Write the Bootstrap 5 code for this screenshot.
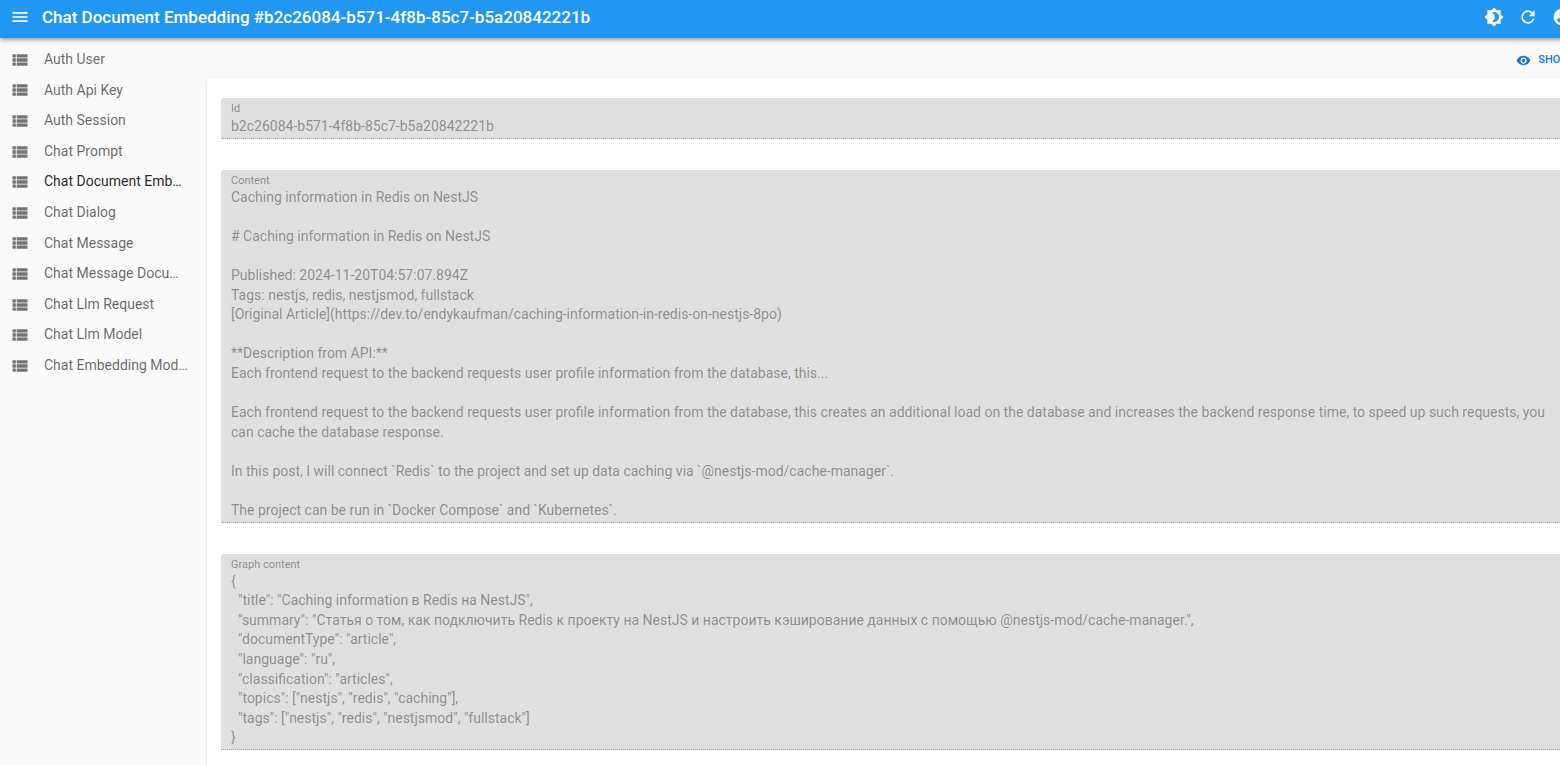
<!DOCTYPE html>
<html lang="en">
<head>
<meta charset="utf-8">
<meta name="viewport" content="width=device-width, initial-scale=1">
<title>Chat Document Embedding</title>
<link href="https://cdn.jsdelivr.net/npm/bootstrap@5.3.0/dist/css/bootstrap.min.css" rel="stylesheet">
<style>
  body { font-family: Roboto, "Liberation Sans", sans-serif; font-size: 14px; line-height: 1.4; background: #fafafa; color: rgba(0,0,0,.87); overflow: hidden; }
  svg { fill: currentColor; width: 20px; height: 20px; flex: none; display: block; }
  .shell { width: calc(100% + 40px); }
  .topbar { background: #2196f3; height: 38px; padding: 0 21px 4px 3px; box-shadow: 0 2px 3px -1px rgba(0,0,0,.2), 0 3px 4px rgba(0,0,0,.14), 0 1px 8px rgba(0,0,0,.12); z-index: 2; }
  .topbar h1 { font-size: 17px; line-height: 24px; font-weight: 500; padding-left: 5px; }
  .icon-btn { width: 34px; height: 34px; padding: 7px; color: #fff; border: 0; }
  .side { width: 206px; padding: 7px 15px 0 0; flex: none; }
  .side a { color: rgba(0,0,0,.6); padding: 5px 2px 5px 10px; gap: 14px; margin-bottom: 1px; text-decoration: none; }
  .side svg { color: rgba(0,0,0,.54); margin: -1px 0; }
  .side a.active { color: rgba(0,0,0,.87); }
  .main-col { padding: 0 16px 0 1px; }
  .actions { height: 40px; padding: 8px 6px 4px 0; }
  .show-link { color: #1976d2; font-size: 11px; line-height: 20px; font-weight: 500; gap: 7px; padding: 0 8px; text-decoration: none; }
  .show-link svg { width: 15px; height: 15px; }
  .panel { background: #fff; border-radius: 4px; padding: 20px 14px; box-shadow: 0 2px 1px -1px rgba(0,0,0,.2), 0 1px 1px rgba(0,0,0,.14), 0 1px 3px rgba(0,0,0,.12); gap: 31px; }
  .filled { background: #e0e0e0; border-radius: 3px 3px 0 0; border-bottom: 1px dotted rgba(0,0,0,.28); padding: 5px 10px 1px; }
  .filled label { color: rgba(0,0,0,.42); font-size: 11px; line-height: 12px; margin-bottom: 1px; }
  .filled input, .filled textarea { display: block; width: 100%; border: 0; background: transparent; color: rgba(0,0,0,.4); padding: 0; resize: none; overflow: hidden; line-height: 1.4; }
  .filled input { padding-top: 1px; }
</style>
</head>
<body>
<div class="shell d-flex flex-column min-vh-100">
  <header class="topbar d-flex align-items-center text-white position-relative">
    <button class="icon-btn btn" type="button" aria-label="Close menu"><svg viewBox="0 0 24 24"><path d="M3 18h18v-2H3v2zm0-5h18v-2H3v2zm0-7v2h18V6H3z"/></svg></button>
    <h1 class="m-0 flex-grow-1 text-truncate">Chat Document Embedding #b2c26084-b571-4f8b-85c7-b5a20842221b</h1>
    <button class="icon-btn btn" type="button" aria-label="Toggle theme"><svg viewBox="0 0 24 24"><path d="M20 8.69V4h-4.69L12 .69 8.69 4H4v4.69L.69 12 4 15.31V20h4.69L12 23.31 15.31 20H20v-4.69L23.31 12 20 8.69zM12 18c-.89 0-1.74-.2-2.5-.55C11.56 16.5 13 14.42 13 12s-1.44-4.5-3.5-5.45C10.26 6.2 11.11 6 12 6c3.31 0 6 2.69 6 6s-2.69 6-6 6z"/></svg></button>
    <button class="icon-btn btn" type="button" aria-label="Refresh"><svg viewBox="0 0 24 24"><path d="M17.65 6.35C16.2 4.9 14.21 4 12 4c-4.42 0-7.99 3.58-7.99 8s3.57 8 7.99 8c3.73 0 6.84-2.55 7.73-6h-2.08c-.82 2.33-3.04 4-5.65 4-3.31 0-6-2.69-6-6s2.69-6 6-6c1.66 0 3.14.69 4.22 1.78L13 11h7V4l-2.35 2.35z"/></svg></button>
    <button class="icon-btn btn" type="button" aria-label="Profile"><svg viewBox="0 0 24 24"><path d="M12 2C6.48 2 2 6.48 2 12s4.48 10 10 10 10-4.48 10-10S17.52 2 12 2zm0 3c1.66 0 3 1.34 3 3s-1.34 3-3 3-3-1.34-3-3 1.34-3 3-3zm0 14.2c-2.5 0-4.71-1.28-6-3.22.03-1.99 4-3.08 6-3.08 1.99 0 5.97 1.09 6 3.08-1.29 1.94-3.5 3.22-6 3.22z"/></svg></button>
  </header>
  <svg class="d-none" aria-hidden="true"><symbol id="list" viewBox="0 0 24 24"><path d="M3 14h4v-4H3v4zm0 5h4v-4H3v4zM3 9h4V5H3v4zm5 5h13v-4H8v4zm0 5h13v-4H8v4zM8 5v4h13V5H8z"/></symbol></svg>
  <div class="d-flex flex-grow-1">
    <nav class="side d-flex flex-column">
      <a class="d-flex align-items-center" href="#"><svg><use href="#list"/></svg><span class="text-truncate">Auth User</span></a>
      <a class="d-flex align-items-center" href="#"><svg><use href="#list"/></svg><span class="text-truncate">Auth Api Key</span></a>
      <a class="d-flex align-items-center" href="#"><svg><use href="#list"/></svg><span class="text-truncate">Auth Session</span></a>
      <a class="d-flex align-items-center" href="#"><svg><use href="#list"/></svg><span class="text-truncate">Chat Prompt</span></a>
      <a class="d-flex align-items-center active" href="#"><svg><use href="#list"/></svg><span class="text-truncate">Chat Document Embedding</span></a>
      <a class="d-flex align-items-center" href="#"><svg><use href="#list"/></svg><span class="text-truncate">Chat Dialog</span></a>
      <a class="d-flex align-items-center" href="#"><svg><use href="#list"/></svg><span class="text-truncate">Chat Message</span></a>
      <a class="d-flex align-items-center" href="#"><svg><use href="#list"/></svg><span class="text-truncate">Chat Message Document</span></a>
      <a class="d-flex align-items-center" href="#"><svg><use href="#list"/></svg><span class="text-truncate">Chat Llm Request</span></a>
      <a class="d-flex align-items-center" href="#"><svg><use href="#list"/></svg><span class="text-truncate">Chat Llm Model</span></a>
      <a class="d-flex align-items-center" href="#"><svg><use href="#list"/></svg><span class="text-truncate">Chat Embedding Models</span></a>
    </nav>
    <main class="main-col flex-grow-1 d-flex flex-column">
      <div class="actions d-flex justify-content-end align-items-center">
        <a class="show-link d-flex align-items-center text-uppercase" href="#"><svg viewBox="0 0 24 24"><path d="M12 4.500C7 4.500 2.730 7.610 1 12c1.730 4.390 6 7.500 11 7.500s9.270-3.110 11-7.500c-1.730-4.390-6-7.500-11-7.500zM12 17c-2.760 0-5-2.240-5-5s2.240-5 5-5 5 2.240 5 5-2.240 5-5 5zm0-8c-1.660 0-3 1.340-3 3s1.340 3 3 3 3-1.340 3-3-1.340-3-3-3z"/></svg>Show</a>
      </div>
      <form class="panel flex-grow-1 d-flex flex-column">
        <div class="filled">
          <label class="d-block" for="f-id">Id</label>
          <input id="f-id" type="text" value="b2c26084-b571-4f8b-85c7-b5a20842221b" disabled>
        </div>
        <div class="filled">
          <label class="d-block" for="f-content">Content</label>
          <textarea id="f-content" rows="17" disabled>Caching information in Redis on NestJS

# Caching information in Redis on NestJS

Published: 2024-11-20T04:57:07.894Z
Tags: nestjs, redis, nestjsmod, fullstack
[Original Article](https://dev.to/endykaufman/caching-information-in-redis-on-nestjs-8po)

**Description from API:**
Each frontend request to the backend requests user profile information from the database, this...

Each frontend request to the backend requests user profile information from the database, this creates an additional load on the database and increases the backend response time, to speed up such requests, you can cache the database response.

In this post, I will connect `Redis` to the project and set up data caching via `@nestjs-mod/cache-manager`.

The project can be run in `Docker Compose` and `Kubernetes`.</textarea>
        </div>
        <div class="filled">
          <label class="d-block" for="f-graph">Graph content</label>
          <textarea id="f-graph" rows="9" disabled>{
  "title": "Caching information в Redis на NestJS",
  "summary": "Статья о том, как подключить Redis к проекту на NestJS и настроить кэширование данных с помощью @nestjs-mod/cache-manager.",
  "documentType": "article",
  "language": "ru",
  "classification": "articles",
  "topics": ["nestjs", "redis", "caching"],
  "tags": ["nestjs", "redis", "nestjsmod", "fullstack"]
}</textarea>
        </div>
      </form>
    </main>
  </div>
</div>
<script src="https://cdn.jsdelivr.net/npm/bootstrap@5.3.0/dist/js/bootstrap.bundle.min.js"></script>
</body>
</html>
